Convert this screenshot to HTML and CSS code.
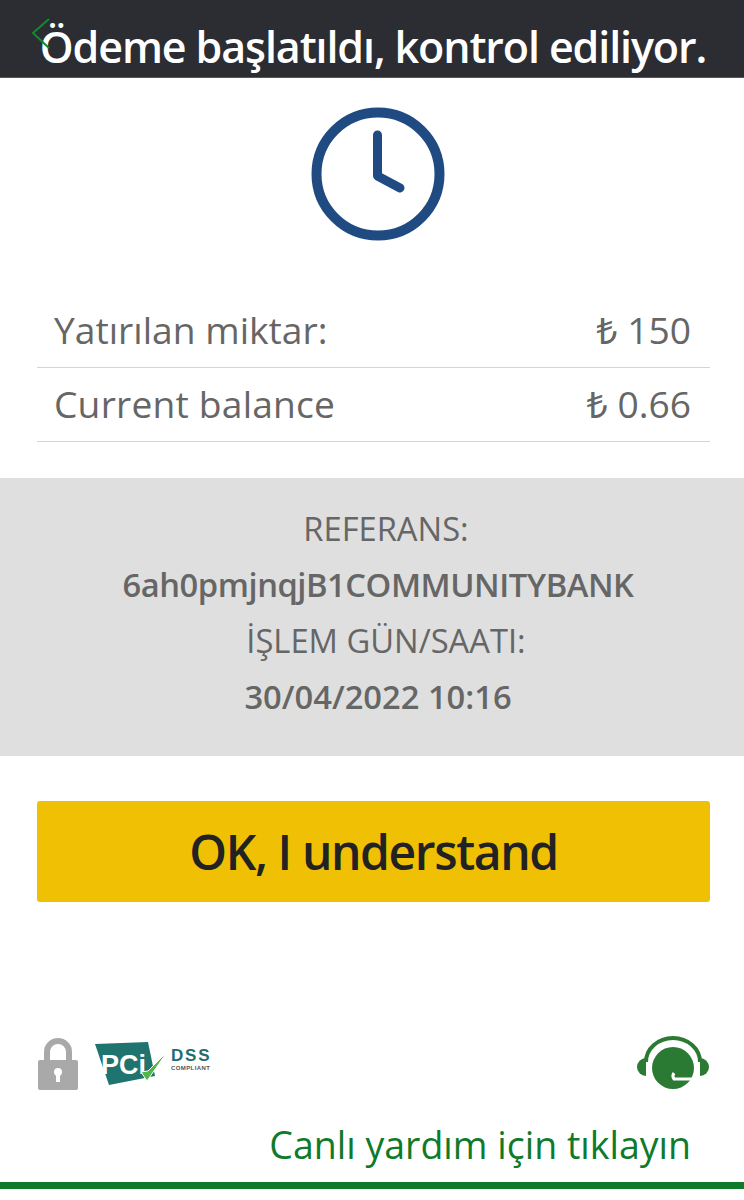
FILE: index.html
```html
<!DOCTYPE html>
<html lang="tr">
<head>
<meta charset="utf-8" />
<title>Ödeme</title>
<link rel="stylesheet" href="styles.css">
</head>
<body>
<div class="page">
	<div class="top-bar">
		<h1 class="top-title">Ödeme başlatıldı, kontrol ediliyor.</h1>
		<svg class="back-icon" width="22" height="34" viewBox="0 0 22 34"><path d="M18 2 L2 16 L18 31" fill="none" stroke="#0f8a2e" stroke-width="2"/></svg>
	</div>

	<div class="status-icon">
		<svg width="134" height="134" viewBox="0 0 134 134">
			<circle cx="67" cy="67" r="61.5" fill="none" stroke="#1f4b82" stroke-width="10"/>
			<path d="M66.5 28 V69 L89 81" fill="none" stroke="#1f4b82" stroke-width="9" stroke-linecap="round" stroke-linejoin="round"/>
		</svg>
	</div>

	<div class="amounts">
		<div class="amount-row"><span>Yatırılan miktar:</span><span><span class="lira">₺</span> 150</span></div>
		<div class="amount-row"><span class="balance-label">Current balance</span><span><span class="lira">₺</span> 0.66</span></div>
	</div>

	<div class="ref-box">
		<p class="ref-label">REFERANS:</p>
		<p class="ref-code">6ah0pmjnqjB1COMMUNITYBANK</p>
		<p class="ref-label">İŞLEM GÜN/SAATI:</p>
		<p class="ref-date">30/04/2022 10:16</p>
	</div>

	<div class="action">
		<button type="button" class="ok-btn">OK, I understand</button>
	</div>

	<div class="trust-row">
		<div class="trust-left">
			<svg width="42" height="54" viewBox="0 0 42 54">
				<path d="M10 24 V15 A11 11 0 0 1 32 15 V24" fill="none" stroke="#a9a9a9" stroke-width="6"/>
				<rect x="1" y="23" width="40" height="30" rx="2" fill="#a9a9a9"/>
				<circle cx="21" cy="35" r="4" fill="#fff"/>
				<rect x="19" y="36" width="4" height="9" fill="#fff"/>
			</svg>
			<svg class="pci-logo" width="120" height="46" viewBox="0 0 120 46">
				<path d="M0 3 L53 1 L60 35 L14 44 Z" fill="#1f7470"/>
				<text x="6" y="33" class="pci-text">PCi</text>
				<path d="M46 31 L52 40 L72 11 L53 30 Z" fill="#4fb848" stroke="#fff" stroke-width="1"/>
				<text x="76" y="20" class="dss-text">DSS</text>
				<text x="76" y="29" class="comp-text">COMPLIANT</text>
			</svg>
		</div>
		<svg width="74" height="56" viewBox="0 0 74 56">
			<path d="M10 26 A27 24 0 0 1 64 26" fill="none" stroke="#2a7a33" stroke-width="4"/>
			<path d="M10 22 A9 9 0 0 0 10 40 Z" fill="#2a7a33"/>
			<path d="M64 22 A9 9 0 0 1 64 40 Z" fill="#2a7a33"/>
			<circle cx="37" cy="32" r="21" fill="#2a7a33"/>
			<path d="M38 37 A5 5 0 0 0 38 43 H57" fill="none" stroke="#fff" stroke-width="3"/>
		</svg>
	</div>

	<a class="help-link">Canlı yardım için tıklayın</a>
	<div class="bottom-line"></div>
</div>
</body>
</html>
```

FILE: styles.css
```css
html, body {
	margin: 0;
	padding: 0;
	background: #fff;
}
.page {
	width: 744px;
	height: 1200px;
	font-family: "Open Sans", "DejaVu Sans", sans-serif;
	color: #666;
}
.top-bar {
	position: relative;
	height: 77px;
	background: #2b2d33;
	border-bottom: 1px solid #55575c;
	text-align: center;
}
.back-icon {
	position: absolute;
	left: 31px;
	top: 17px;
}
.top-title {
	margin: 0;
	padding-left: 2px;
	color: #fff;
	font-size: 43px;
	font-weight: 600;
	letter-spacing: -1.1px;
	line-height: 94px;
	height: 77px;
	overflow: hidden;
	white-space: nowrap;
}
.status-icon {
	display: flex;
	justify-content: center;
	padding-top: 29px;
	margin-left: 12px;
}
.status-icon svg {
	display: block;
}
.amounts {
	margin: 53px 34px 0 37px;
}
.amount-row {
	display: flex;
	justify-content: space-between;
	height: 73px;
	padding: 0 19px 0 17px;
	border-bottom: 1px solid #d4d4d4;
	font-size: 37.2px;
	line-height: 71px;
}
.balance-label {
	letter-spacing: 0.2px;
}
.lira {
	font-family: "Noto Sans", "DejaVu Sans", sans-serif;
	font-weight: 400;
}
.ref-box {
	margin-top: 36px;
	height: 278px;
	padding-top: 23px;
	box-sizing: border-box;
	background: #dfdfdf;
	text-align: center;
	font-size: 32.7px;
}
.ref-box p {
	margin: 0;
	line-height: 56px;
}
.ref-label {
	padding-left: 28px;
}
.ref-code {
	padding-left: 12px;
	font-weight: 600;
	letter-spacing: -0.45px;
}
.ref-date {
	padding-left: 12px;
	font-weight: 600;
}
.action {
	margin: 45px 34px 0 37px;
}
.ok-btn {
	display: block;
	width: 100%;
	height: 101px;
	border: 0;
	border-radius: 3px;
	background: #efc004;
	color: #222;
	font-family: inherit;
	font-size: 48px;
	font-weight: 600;
	letter-spacing: -1.4px;
}
.trust-row {
	display: flex;
	justify-content: space-between;
	align-items: center;
	margin: 134px 34px 0 37px;
}
.trust-left {
	display: flex;
	align-items: center;
	gap: 16px;
}
.pci-text {
	font-family: "Liberation Sans", sans-serif;
	font-size: 27px;
	font-weight: 700;
	fill: #fff;
}
.dss-text {
	font-family: "Liberation Sans", sans-serif;
	font-size: 17px;
	font-weight: 700;
	letter-spacing: 1.8px;
	fill: #1f6d70;
}
.comp-text {
	font-family: "Liberation Sans", sans-serif;
	font-size: 6px;
	font-weight: 700;
	letter-spacing: 0.4px;
	fill: #555;
}
.help-link {
	display: block;
	margin-top: 23px;
	padding-right: 53px;
	text-align: right;
	color: #0f7a2a;
	font-size: 37.5px;
	line-height: 60px;
}
.bottom-line {
	height: 7px;
	margin-top: 7px;
	background: #0f7a2a;
}
```
